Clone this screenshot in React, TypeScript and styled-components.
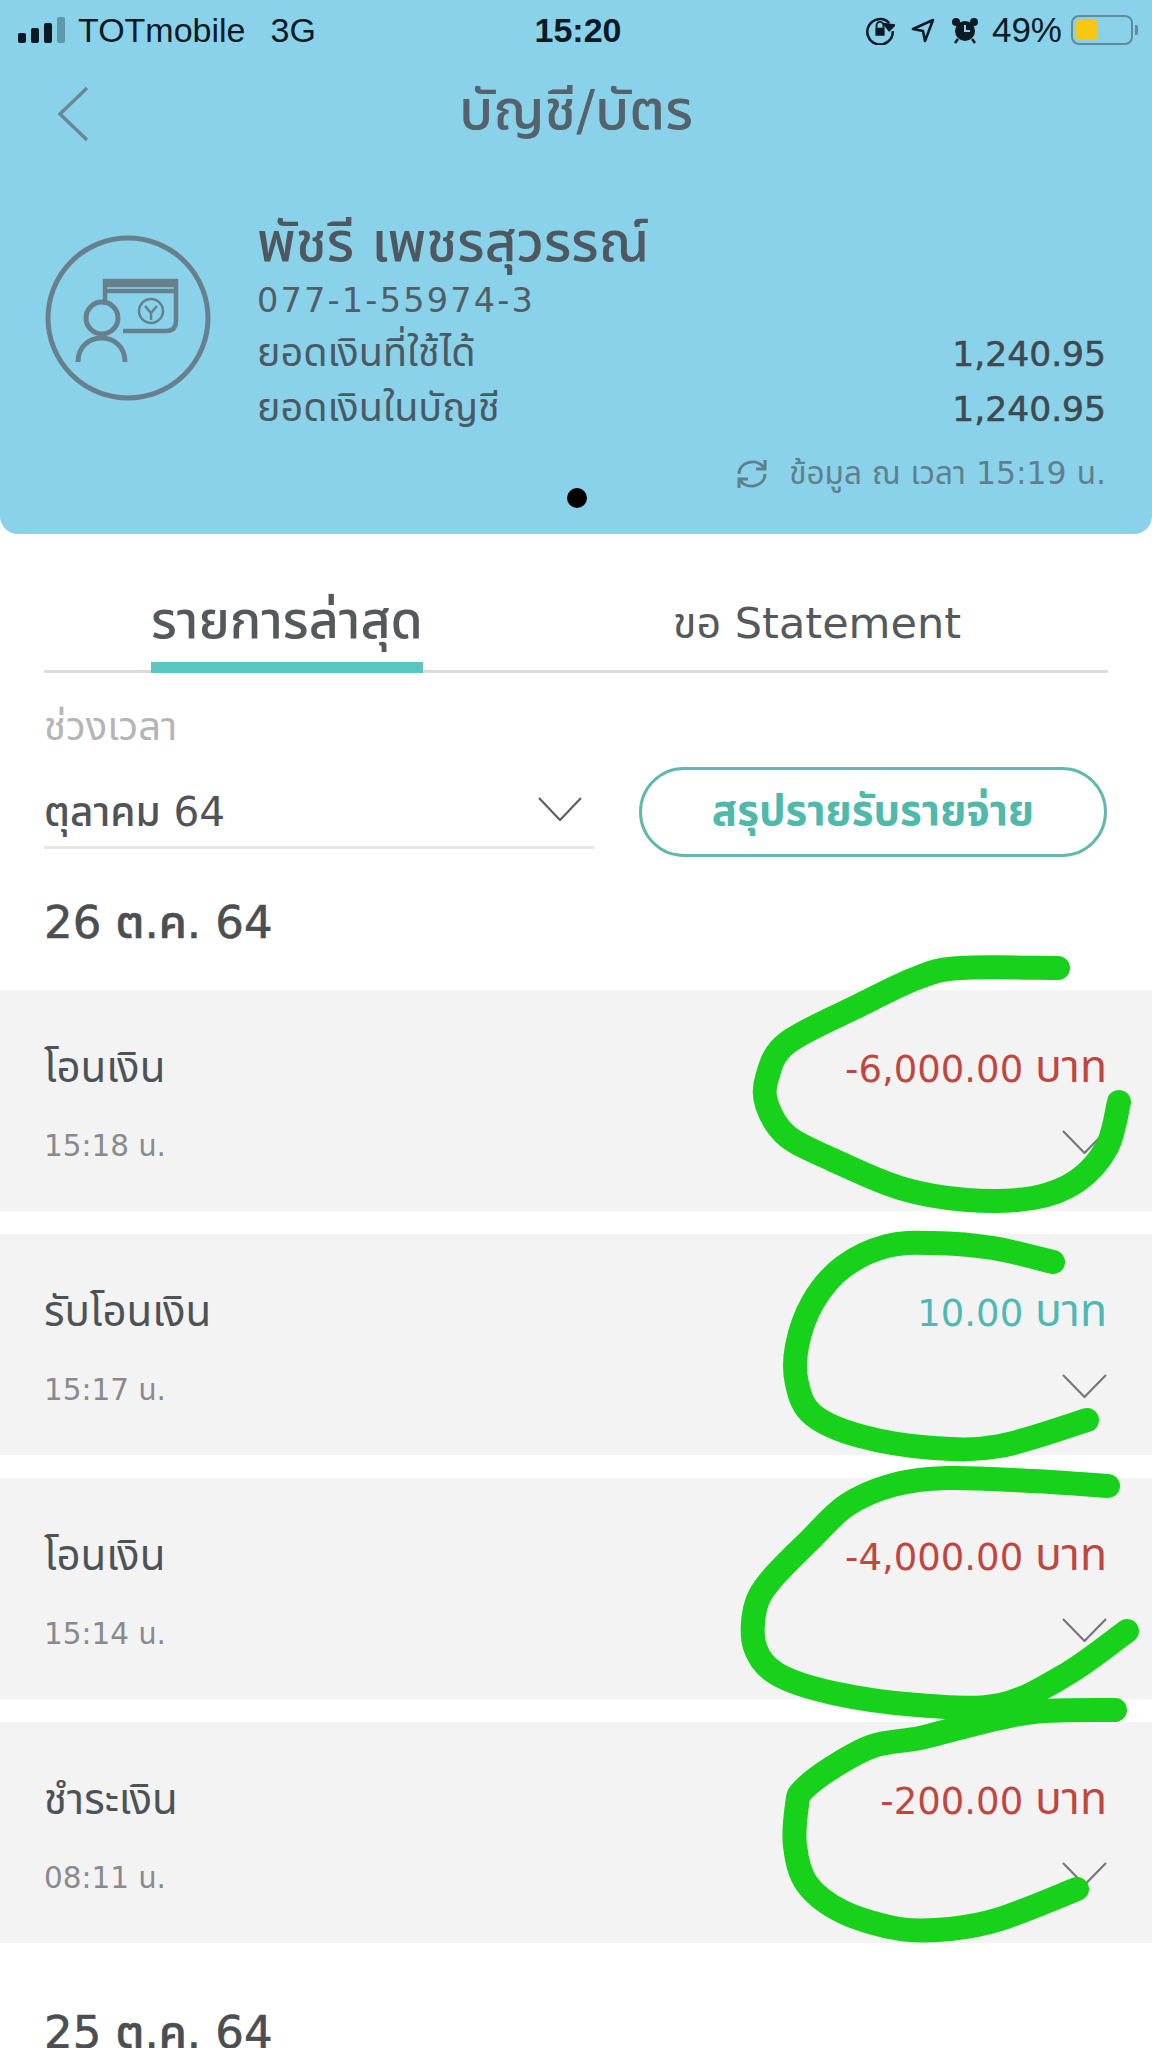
import React from "react"
import styled, { createGlobalStyle } from "styled-components"

const FONT = `"DejaVu Sans", "Noto Sans Thai", "Noto Sans", sans-serif`

const GlobalStyle = createGlobalStyle`
  html, body { margin: 0; padding: 0; background: #fff; }
  body { font-family: ${FONT}; color: #4f5a61; }
  * { box-sizing: border-box; }
`

type Tx = { title: string; time: string; amount: string; income?: boolean }

const transactions: Tx[] = [
  { title: "โอนเงิน", time: "15:18 น.", amount: "-6,000.00" },
  { title: "รับโอนเงิน", time: "15:17 น.", amount: "10.00", income: true },
  { title: "โอนเงิน", time: "15:14 น.", amount: "-4,000.00" },
  { title: "ชำระเงิน", time: "08:11 น.", amount: "-200.00" },
]

// marker scribbles drawn on top of the screenshot
const scribbles: number[][][] = [
  [[1058,968],[960,968],[917,978],[860,1005],[787,1043],[767,1078],[767,1105],[787,1136],[833,1160],[900,1188],[967,1200],[1033,1198],[1077,1181],[1107,1147],[1119,1102]],
  [[1053,1262],[993,1248],[933,1243],[887,1246],[843,1267],[813,1302],[797,1346],[797,1384],[813,1415],[860,1436],[933,1448],[1000,1446],[1087,1420]],
  [[1108,1486],[1033,1481],[947,1478],[893,1485],[847,1505],[810,1540],[770,1581],[755,1609],[755,1647],[777,1674],[833,1693],[917,1705],[1000,1705],[1067,1674],[1127,1631]],
  [[1115,1710],[1033,1712],[967,1726],[920,1738],[873,1746],[833,1767],[803,1790],[797,1805],[795,1846],[807,1884],[843,1912],[900,1929],[950,1929],[1000,1919],[1077,1889]],
]

const smooth = (p: number[][]) => {
  let d = `M${p[0][0]} ${p[0][1]}`
  for (let i = 0; i < p.length - 1; i++) {
    const a = p[Math.max(i - 1, 0)], b = p[i], c = p[i + 1], e = p[Math.min(i + 2, p.length - 1)]
    const c1 = [b[0] + (c[0] - a[0]) / 6, b[1] + (c[1] - a[1]) / 6]
    const c2 = [c[0] - (e[0] - b[0]) / 6, c[1] - (e[1] - b[1]) / 6]
    d += ` C${c1[0]} ${c1[1]} ${c2[0]} ${c2[1]} ${c[0]} ${c[1]}`
  }
  return d
}

const Chevron: React.FC<{ w: number; h: number; color: string }> = ({ w, h, color }) => (
  <svg width={w} height={h} viewBox={`0 0 ${w} ${h}`} fill="none">
    <path d={`M1 1L${w / 2} ${h - 1}L${w - 1} 1`} stroke={color} strokeWidth="2.2" />
  </svg>
)

const AccountIcon = () => (
  <svg width="166" height="166" viewBox="0 0 166 166" fill="none" stroke="#66808e" strokeWidth="5">
    <circle cx="83" cy="83" r="80" />
    <path d="M60 70V46H131V86Q131 96 121 96H78" strokeWidth="4.5" />
    <path d="M60 50H131M60 56H131" strokeWidth="4.5" />
    <circle cx="57" cy="83" r="16" />
    <path d="M33 127C33 95 80 95 80 127" />
    <circle cx="106" cy="76" r="12" strokeWidth="2.5" />
    <path d="M100 71L106 78L112 71M106 78V85" strokeWidth="2.5" />
  </svg>
)

const RefreshIcon = () => (
  <svg width="34" height="34" viewBox="0 0 34 34" fill="none" stroke="#5f7f8d" strokeWidth="3">
    <path d="M4 17C4 5 22 0 29 11" />
    <path d="M30 3V12H21" />
    <path d="M30 17C30 29 12 34 5 23" />
    <path d="M4 31V22H13" />
  </svg>
)

export default function App() {
  return (
    <S.Page>
      <GlobalStyle />
      <S.Header>
        <S.StatusBar>
          <S.StatusLeft>
            <S.Signal>
              <S.Bar h={10} /><S.Bar h={15} /><S.Bar h={20} /><S.Bar h={26} dim />
            </S.Signal>
            <span>TOTmobile</span>
            <S.Network>3G</S.Network>
          </S.StatusLeft>
          <S.Clock>15:20</S.Clock>
          <S.StatusRight>
            <svg width="30" height="30" viewBox="0 0 26 26" fill="none" stroke="#0c1a24" strokeWidth="2.2">
              <path d="M21 7A11 11 0 1 0 24 14" />
              <path d="M25 9L21 13L17 8Z" fill="#0c1a24" />
              <rect x="9" y="11" width="8" height="7" fill="#0c1a24" stroke="none" />
              <path d="M10 11V9A3 3 0 0 1 16 9V11" strokeWidth="1.6" />
            </svg>
            <svg width="26" height="26" viewBox="0 0 26 26" fill="none" stroke="#0c1a24" strokeWidth="2.6">
              <path d="M23 3L3 12L13 14L15 24Z" strokeLinejoin="round" />
            </svg>
            <svg width="28" height="28" viewBox="0 0 28 28" fill="#0c1a24">
              <circle cx="14" cy="15" r="10" />
              <circle cx="5" cy="6" r="4" />
              <circle cx="23" cy="6" r="4" />
              <path d="M14 9V15H19" stroke="#8ad2e9" strokeWidth="2" fill="none" />
              <path d="M7 23L4 27M21 23L24 27" stroke="#0c1a24" strokeWidth="2.5" />
            </svg>
            <S.Percent>49%</S.Percent>
            <S.Battery><S.BatteryFill /></S.Battery>
            <S.BatteryTip />
          </S.StatusRight>
        </S.StatusBar>

        <S.NavBar>
          <S.BackButton>
            <svg width="34" height="56" viewBox="0 0 34 56" fill="none">
              <path d="M31 2L4 28L31 54" stroke="#6a8794" strokeWidth="3.4" />
            </svg>
          </S.BackButton>
          <S.PageTitle>บัญชี/บัตร</S.PageTitle>
        </S.NavBar>

        <S.AccountRow>
          <AccountIcon />
          <S.AccountInfo>
            <S.Name>พัชรี เพชรสุวรรณ์</S.Name>
            <S.AccountNo>077-1-55974-3</S.AccountNo>
            <S.BalanceRow>
              <span>ยอดเงินที่ใช้ได้</span>
              <S.BalanceValue>1,240.95</S.BalanceValue>
            </S.BalanceRow>
            <S.BalanceRow>
              <span>ยอดเงินในบัญชี</span>
              <S.BalanceValue>1,240.95</S.BalanceValue>
            </S.BalanceRow>
            <S.UpdatedRow>
              <RefreshIcon />
              <span>ข้อมูล ณ เวลา 15:19 น.</span>
            </S.UpdatedRow>
          </S.AccountInfo>
        </S.AccountRow>
        <S.Dot />
      </S.Header>

      <S.Tabs>
        <S.Tab active>รายการล่าสุด</S.Tab>
        <S.Tab>ขอ Statement</S.Tab>
      </S.Tabs>

      <S.FilterLabel>ช่วงเวลา</S.FilterLabel>
      <S.FilterRow>
        <S.Select>
          <S.SelectValue>ตุลาคม 64</S.SelectValue>
          <Chevron w={44} h={24} color="#5f5f5f" />
        </S.Select>
        <S.SummaryButton>สรุปรายรับรายจ่าย</S.SummaryButton>
      </S.FilterRow>

      <S.DateHeading>26 ต.ค. 64</S.DateHeading>
      <S.List>
        {transactions.map((t) => (
          <S.Row key={t.time}>
            <S.RowLine>
              <S.RowTitle>{t.title}</S.RowTitle>
              <S.Amount income={t.income}>{t.amount} <S.AmountUnit>บาท</S.AmountUnit></S.Amount>
            </S.RowLine>
            <S.RowLine>
              <S.RowTime>{t.time}</S.RowTime>
              <S.RowChevron><Chevron w={45} h={24} color="#77777b" /></S.RowChevron>
            </S.RowLine>
          </S.Row>
        ))}
      </S.List>
      <S.DateHeading next>25 ต.ค. 64</S.DateHeading>

      <S.Scribbles viewBox="0 0 1152 2048" fill="none">
        {scribbles.map((p, i) => (
          <path key={i} d={smooth(p)} stroke="#17d11a" strokeWidth="24" strokeLinecap="round" strokeLinejoin="round" />
        ))}
      </S.Scribbles>
    </S.Page>
  )
}

const S = {
  Page: styled.div`
    position: relative;
    width: 1152px;
    height: 2048px;
    overflow: hidden;
    background: #fff;
  `,
  Header: styled.header`
    position: relative;
    height: 534px;
    background: #8ad2e9;
    border-radius: 0 0 18px 18px;
  `,
  StatusBar: styled.div`
    display: grid;
    grid-template-columns: 1fr auto 1fr;
    align-items: center;
    height: 60px;
    padding: 0 14px 0 18px;
    font-family: "Liberation Sans", sans-serif;
    font-size: 34px;
    color: #0c1a24;
  `,
  StatusLeft: styled.div`
    display: flex;
    align-items: center;
  `,
  Signal: styled.div`
    display: flex;
    align-items: flex-end;
    gap: 5px;
    margin-right: 13px;
    height: 26px;
  `,
  Bar: styled.i<{ h: number; dim?: boolean }>`
    width: 8px;
    height: ${({ h }) => h}px;
    border-radius: 2px;
    background: ${({ dim }) => (dim ? "#5f97ac" : "#0c1a24")};
  `,
  Network: styled.span`
    margin-left: 25px;
  `,
  Clock: styled.div`
    font-weight: 700;
  `,
  StatusRight: styled.div`
    display: flex;
    align-items: center;
    justify-content: flex-end;
    gap: 15px;
  `,
  Percent: styled.span`
    margin-left: -2px;
    font-size: 35px;
  `,
  Battery: styled.div`
    width: 62px;
    height: 30px;
    margin-left: -6px;
    padding: 3px;
    border: 2px solid #5f8c9d;
    border-radius: 8px;
  `,
  BatteryFill: styled.div`
    width: 22px;
    height: 100%;
    border-radius: 3px;
    background: #f6c814;
  `,
  BatteryTip: styled.i`
    width: 3px;
    height: 10px;
    margin-left: -13px;
    border-radius: 0 2px 2px 0;
    background: #5f8c9d;
  `,
  NavBar: styled.div`
    display: flex;
    align-items: center;
    justify-content: center;
    position: relative;
    height: 96px;
    margin-top: -2px;
  `,
  BackButton: styled.div`
    position: absolute;
    left: 56px;
    top: 28px;
    line-height: 0;
  `,
  PageTitle: styled.h1`
    margin: 12px 0 0;
    font-size: 56px;
    font-weight: 500;
    color: #54626b;
  `,
  AccountRow: styled.div`
    display: flex;
    align-items: flex-start;
    gap: 46px;
    padding: 81px 46px 0 45px;
  `,
  AccountInfo: styled.div`
    flex: 1;
    margin-top: -23px;
  `,
  Name: styled.div`
    height: 65px;
    font-size: 55px;
    line-height: 60px;
    font-weight: 500;
    color: #4d5860;
    white-space: nowrap;
  `,
  AccountNo: styled.div`
    height: 49px;
    font-size: 33.5px;
    line-height: 48px;
    letter-spacing: 2.2px;
    color: #4f5f68;
  `,
  BalanceRow: styled.div`
    display: flex;
    align-items: center;
    justify-content: space-between;
    height: 55px;
    font-size: 39.5px;
    color: #4a5a64;
  `,
  BalanceValue: styled.span`
    font-size: 34.5px;
    font-weight: 500;
    color: #40494f;
    -webkit-text-stroke: 0.6px #40494f;
  `,
  UpdatedRow: styled.div`
    display: flex;
    align-items: center;
    justify-content: flex-end;
    gap: 20px;
    height: 62px;
    margin-top: 7px;
    font-size: 31.5px;
    color: #5f7f8d;
  `,
  Dot: styled.i`
    position: absolute;
    left: 567px;
    top: 488px;
    width: 20px;
    height: 20px;
    border-radius: 50%;
    background: #000;
  `,
  Tabs: styled.nav`
    display: flex;
    justify-content: flex-start;
    height: 139px;
    margin: 0 44px;
    border-bottom: 3px solid #dcdcdc;
  `,
  Tab: styled.div<{ active?: boolean }>`
    display: flex;
    align-items: center;
    height: 139px;
    padding-top: ${({ active }) => (active ? 48 : 42)}px;
    font-size: ${({ active }) => (active ? 52 : 43)}px;
    font-weight: ${({ active }) => (active ? 500 : 400)};
    color: #55595c;
    white-space: nowrap;
    margin-left: ${({ active }) => (active ? 107 : 250)}px;
    ${({ active }) => active && `border-bottom: 11px solid #59c6bf;`}
  `,
  FilterLabel: styled.div`
    margin: 30px 44px 0;
    height: 46px;
    font-size: 40px;
    line-height: 46px;
    color: #b5b5b5;
  `,
  FilterRow: styled.div`
    display: flex;
    align-items: flex-end;
    gap: 45px;
    margin: 18px 45px 0 44px;
    height: 90px;
  `,
  Select: styled.div`
    display: flex;
    align-items: center;
    justify-content: space-between;
    width: 550px;
    height: 78px;
    padding: 0 12px 0 0;
    border-bottom: 3px solid #e6e6e6;
    color: #505458;
    margin-bottom: 8px;
  `,
  SelectValue: styled.span`
    margin-top: 10px;
    font-size: 40.5px;
    font-weight: 500;
  `,
  SummaryButton: styled.button`
    flex: 1;
    height: 90px;
    padding: 0;
    background: #fff;
    border: 3px solid #62b8ae;
    border-radius: 45px;
    font-family: ${FONT};
    font-size: 42px;
    font-weight: 700;
    color: #4fb9ab;
  `,
  DateHeading: styled.h2<{ next?: boolean }>`
    margin: ${({ next }) => (next ? "60px 44px 0" : "36px 44px 0")};
    height: 60px;
    font-size: 45px;
    line-height: 60px;
    font-weight: 500;
    color: #4b4f52;
    -webkit-text-stroke: 0.6px #4b4f52;
  `,
  List: styled.div`
    display: flex;
    flex-direction: column;
    gap: 23px;
    margin-top: 37px;
  `,
  Row: styled.div`
    display: flex;
    flex-direction: column;
    justify-content: center;
    gap: 36px;
    height: 221px;
    padding: 14px 45px 0 44px;
    background: #f3f3f4;
  `,
  RowLine: styled.div`
    display: flex;
    align-items: center;
    justify-content: space-between;
    height: 42px;
  `,
  RowTitle: styled.span`
    font-size: 42px;
    color: #4d5256;
  `,
  RowTime: styled.span`
    font-size: 29.5px;
    color: #8a8a8c;
  `,
  RowChevron: styled.span`
    margin-top: -10px;
    line-height: 0;
  `,
  Amount: styled.span<{ income?: boolean }>`
    font-size: 37px;
    color: ${({ income }) => (income ? "#4db8b4" : "#c0473f")};
  `,
  AmountUnit: styled.span`
    font-size: 44.5px;
  `,
  Scribbles: styled.svg`
    position: absolute;
    left: 0;
    top: 0;
    width: 1152px;
    height: 2048px;
    pointer-events: none;
  `,
}
